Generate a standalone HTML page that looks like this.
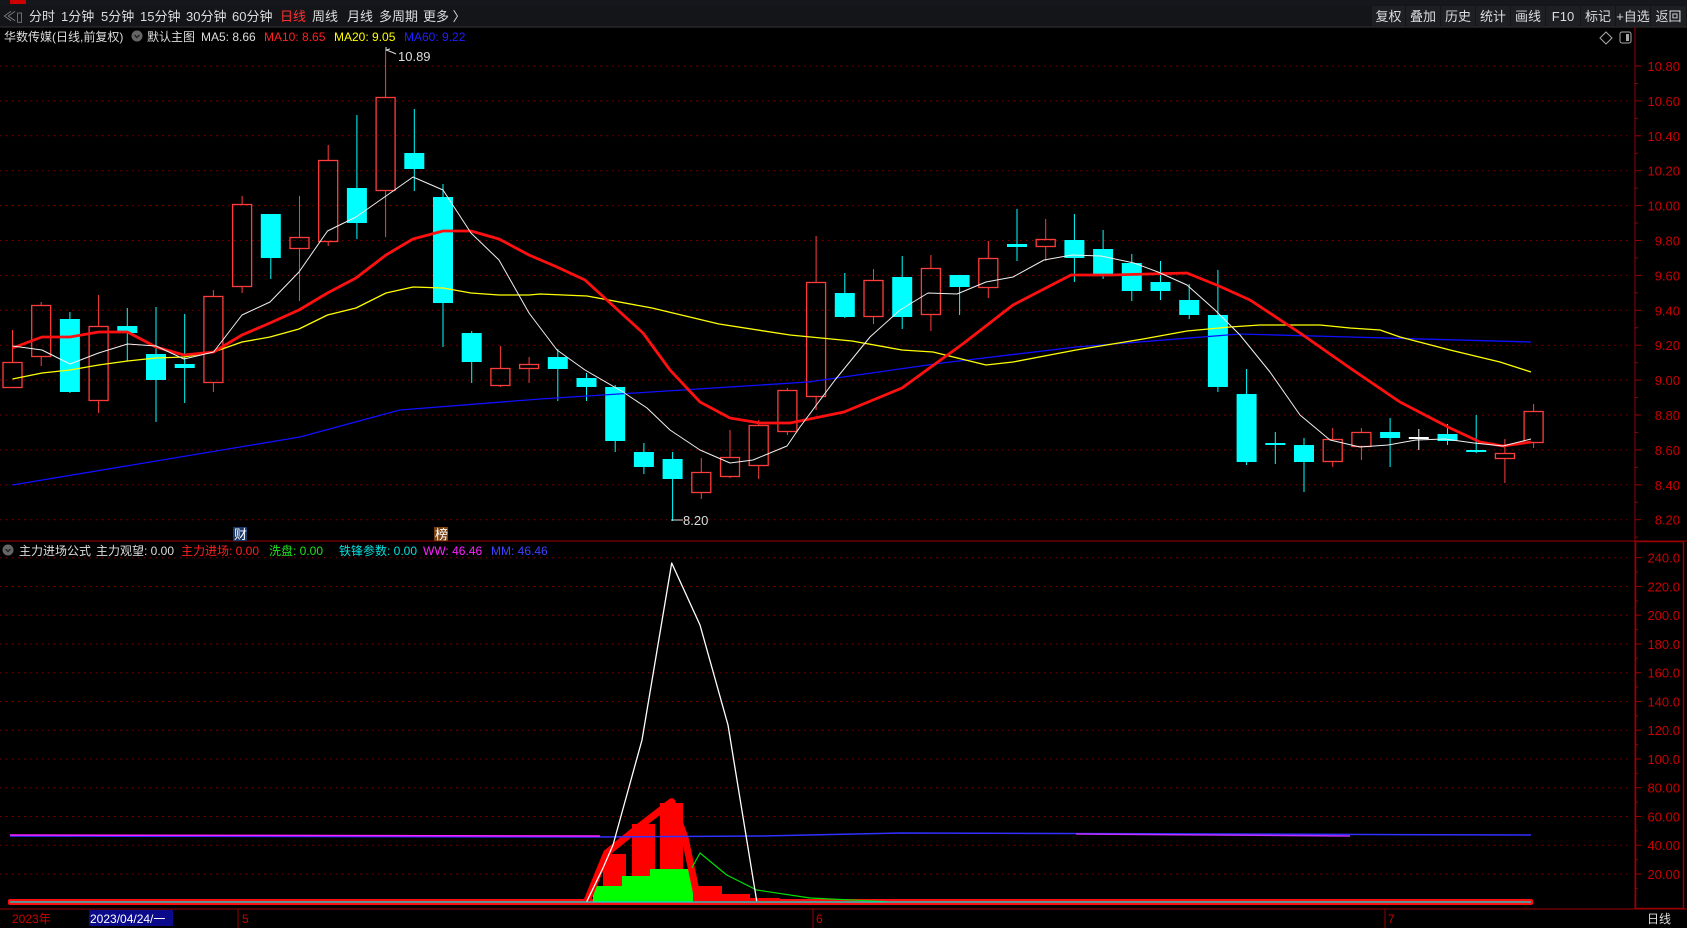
<!DOCTYPE html>
<html><head><meta charset="utf-8"><style>
html,body{margin:0;padding:0;background:#000;width:1687px;height:928px;overflow:hidden}
svg{display:block}
text{font-family:"Liberation Sans","Noto Sans CJK SC",sans-serif;font-size:13px}
.i text{font-size:12px}
</style></head><body>
<svg id="s" width="1687" height="928" xmlns="http://www.w3.org/2000/svg">
<rect width="1687" height="928" fill="#000"/>
<rect x="0" y="0" width="1687" height="5" fill="#15171c"/>
<rect x="10" y="0" width="16" height="4" fill="#c00"/>
<rect x="0" y="5" width="1687" height="22" fill="#141518"/>
<line x1="0" y1="27" x2="1687" y2="27" stroke="#333"/>
<g fill="#ddd">
<text x="3" y="21" fill="#888" font-size="11">≪▯</text>
<text x="29" y="21">分时</text><text x="61" y="21">1分钟</text><text x="101" y="21">5分钟</text>
<text x="140" y="21">15分钟</text><text x="186" y="21">30分钟</text><text x="232" y="21">60分钟</text>
<text x="280" y="21" fill="#ff3030">日线</text><text x="312" y="21">周线</text><text x="347" y="21">月线</text>
<text x="379" y="21">多周期</text><text x="423" y="21">更多 〉</text>
</g>
<g id="btns"></g>
<g class="i">
<text x="4" y="41" fill="#ddd">华数传媒(日线,前复权)</text>
<circle cx="137" cy="36" r="5.5" fill="#666"/><path d="M134.5 35l2.5 2.5 2.5-2.5" stroke="#222" stroke-width="1.4" fill="none"/>
<text x="147" y="41" fill="#ddd">默认主图</text>
<text x="201" y="41" fill="#ddd">MA5: 8.66</text>
<text x="264" y="41" fill="#ff2020">MA10: 8.65</text>
<text x="334" y="41" fill="#ffff00">MA20: 9.05</text>
<text x="404" y="41" fill="#2020ff">MA60: 9.22</text>
</g>
<path d="M1600 38l6-6 6 6-6 6z" stroke="#aaa" fill="none"/>
<rect x="1620" y="32" width="11" height="11" rx="2" stroke="#aaa" fill="none"/><rect x="1626" y="34" width="3" height="7" fill="#aaa"/>
<g id="grid"></g>
<g id="chart"></g>
<line x1="1635" y1="27" x2="1635" y2="909" stroke="#900"/>
<line x1="0" y1="541" x2="1687" y2="541" stroke="#900"/>
<rect x="1635.5" y="541.5" width="48" height="367" fill="none" stroke="#900" stroke-width="1.5"/>
<line x1="0" y1="909" x2="1687" y2="909" stroke="#900"/>
<g class="i">
<circle cx="8" cy="550" r="5.5" fill="#666"/><path d="M5.5 549l2.5 2.5 2.5-2.5" stroke="#222" stroke-width="1.4" fill="none"/>
<text x="19" y="555" fill="#ddd">主力进场公式</text>
<text x="96" y="555" fill="#ddd">主力观望: 0.00</text>
<text x="181" y="555" fill="#ff2020">主力进场: 0.00</text>
<text x="269" y="555" fill="#20e020">洗盘: 0.00</text>
<text x="339" y="555" fill="#00e0e0">铁锋参数: 0.00</text>
<text x="423" y="555" fill="#ff20ff">WW: 46.46</text>
<text x="491" y="555" fill="#4040ff">MM: 46.46</text>
</g>
<rect x="233" y="527" width="14" height="14" fill="#1a3a6a"/><text x="234" y="539" fill="#fff" font-size="12">财</text>
<rect x="434" y="527" width="14" height="14" fill="#7a4010"/><text x="435" y="539" fill="#fff" font-size="12">榜</text>
<g class="i">
<text x="12" y="923" fill="#c00">2023年</text>
<rect x="89" y="910" width="84" height="16" fill="#0a0a8a"/>
<text x="90" y="923" fill="#fff">2023/04/24/一</text>
<line x1="238" y1="909" x2="238" y2="928" stroke="#900"/><text x="242" y="923" fill="#c00">5</text>
<line x1="813" y1="909" x2="813" y2="928" stroke="#900"/><text x="816" y="923" fill="#c00">6</text>
<line x1="1385" y1="909" x2="1385" y2="928" stroke="#900"/><text x="1388" y="923" fill="#c00">7</text>
<text x="1647" y="923" fill="#ddd">日线</text>
</g>
</svg>
<script>
var NS="http://www.w3.org/2000/svg";
function el(p,t,a,txt){var e=document.createElementNS(NS,t);for(var k in a)e.setAttribute(k,a[k]);if(txt!==undefined)e.textContent=txt;p.appendChild(e);return e;}
var s=document.getElementById('s'),G=document.getElementById('grid'),C=document.getElementById('chart'),B=document.getElementById('btns');
var bl=[["复权",1372],["叠加",1406],["历史",1441],["统计",1476],["画线",1511],["F10",1546],["标记",1581],["+自选",1616],["返回",1651]];
bl.forEach(function(b,i){var w=(i<8?bl[i+1][1]:1687)-b[1]-1;el(B,'rect',{x:b[1],y:6,width:w,height:20,fill:'#1e1f22'});el(B,'text',{x:b[1]+w/2,y:21,fill:'#ddd','text-anchor':'middle'},b[0]);});
for(var k=0;k<14;k++){var y=66+k*34.9;el(G,'line',{x1:0,y1:y,x2:1630,y2:y,stroke:'#7a0000','stroke-dasharray':'1.5,4.5'});
el(G,'line',{x1:1635,y1:y,x2:1641,y2:y,stroke:'#900'});el(G,'line',{x1:1635,y1:y+17.45,x2:1638,y2:y+17.45,stroke:'#900'});
el(G,'text',{x:1680,y:y+5,fill:'#c80000','text-anchor':'end','font-size':'12.5'},(10.8-k*0.2).toFixed(2));}
for(var k=0;k<12;k++){var y=557.7+k*28.75;el(G,'line',{x1:0,y1:y,x2:1630,y2:y,stroke:'#7a0000','stroke-dasharray':'1.5,4.5'});
el(G,'line',{x1:1635,y1:y,x2:1641,y2:y,stroke:'#900'});el(G,'line',{x1:1635,y1:y+14.4,x2:1638,y2:y+14.4,stroke:'#900'});
var v=240-k*20;el(G,'text',{x:1680,y:y+5,fill:'#c80000','text-anchor':'end','font-size':'12.5'},v>=100?v.toFixed(1):v.toFixed(2));}
var cd=[["R",362,388,330,388],["R",305,357,302,366],["C",319,392,312,393],["R",326,401,295,413],["C",326,333,308,361],["C",354,380,307,422],["C",364,368,314,403],["R",296,383,290,392],["R",204,287,196,293],["C",214,258,214,279],["R",237,249,196,301],["R",160,242,145,246],["C",188,223,115,239],["R",97,191,50,237],["C",153,169,109,191],["C",197,303,184,347],["C",333,362,331,383],["R",368,386,346,387],["R",364,369,357,383],["C",357,369,349,401],
["C",378,387,373,401],["C",387,441,385,452],["C",452,467,443,474],["C",459,479,452,521],["R",472,493,458,499],["R",457,477,430,478],["R",425,466,420,479],["R",390,432,388,435],["R",282,397,236,410],["C",293,317,273,318],["R",280,317,269,324],["C",277,317,256,329],["R",268,315,255,331],["C",275,287,275,315],["R",258,288,241,298],["C",244,247,209,261],["R",239,247,219,261],["C",240,258,214,282],["C",249,274,230,279],["C",263,291,254,301],["C",282,291,261,300],["C",300,315,284,319],["C",315,387,270,392],["C",394,462,369,465],["C",443,445,432,464],["C",445,462,438,492],["R",439,462,428,467],["R",432,447,428,460],["C",432,438,418,467],["W",437,439,429,450],["C",434,441,424,445],["C",450,452,415,453],["R",453,459,439,483],["R",411,443,404,448]];
cd.forEach(function(c,i){var x=12.5+i*28.7;var col=c[0]=="R"?"#ff3c3c":c[0]=="W"?"#fff":"#00ffff";
if(c[0]=="R"){el(C,'line',{x1:x,y1:c[3],x2:x,y2:c[1],stroke:col});el(C,'line',{x1:x,y1:c[2],x2:x,y2:c[4],stroke:col});el(C,'rect',{x:x-9.5,y:c[1]+.5,width:19,height:Math.max(c[2]-c[1]-1,1),fill:'none',stroke:col,'stroke-width':1.3});}
else{el(C,'line',{x1:x,y1:c[3],x2:x,y2:c[4],stroke:col});el(C,'rect',{x:x-10,y:c[1],width:20,height:Math.max(c[2]-c[1],2),fill:col});}});
function pl(pts,col,w){el(C,'polyline',{points:pts,fill:'none',stroke:col,'stroke-width':w,'stroke-linejoin':'round'});}
pl("12.5,485 300,437 400,410 540,399 808,382 942,363 1076,347 1240,334 1350,337 1531,342","#1010ff",1.3);
pl("12.5,379 42,373 70,370 98.6,365 127.5,361 156,358 184,357 213.6,352 242,342 270,337 299,329 327.5,315 356,308 386,293 413,287 443,288 471,293 499,295 529,295 540,294 587,296 652,308 719,324 790,335 852,341 902,350 933,352 986,365 1013,362 1076,350 1143,339 1187,331 1230,327 1260,325 1320,325 1350,328 1380,330 1400,337 1450,350 1500,362 1531,372","#ffff00",1.3);
pl("12.5,348 42,337 70,337 98.6,332 127.5,332 156,347 184,355 213.6,352 242,335 270,323 299,310 327.5,293 356,278 386,255 413,239 443,231 471,231 499,239 529,255 557,267 585,280 643,333 670,370 700,402 730,418 760,423 790,423 844,412 902,388 964,343 1013,305 1071,275 1111,275 1187,273 1219,286 1250,300 1300,333 1350,368 1400,402 1450,428 1480,442 1503,446 1531,442","#ff1010",2.8);
pl("12.5,346 42,350 70,364 98.6,353 127.5,344 156,346 184,359 213.6,352 242,315 270,302 299,272 327.5,231 356,217 386,196 413,177 443,190 471,233 499,260 529,313 557,350 585,370 623,392 647,408 670,430 700,450 730,463 753,460 787,446 800,427 835,380 870,337 900,310 928,293 957,294 986,282 1013,277 1044,260 1072,255 1101,256 1134,263 1158,272 1187,285 1215,310 1240,335 1270,372 1300,415 1330,440 1360,447 1388,445 1416,440 1445,439 1474,443 1503,446 1531,439","#f0f0f0",1);
el(C,'path',{d:'M386 50l4-1M386 50l0 -3M386 50q6 2 10 4',stroke:'#ddd',fill:'none'});
el(C,'text',{x:398,y:61,fill:'#ddd','font-size':'12'},"10.89");
el(C,'line',{x1:671,y1:520,x2:683,y2:520,stroke:'#ddd'});
el(C,'text',{x:683,y:525,fill:'#ddd','font-size':'12'},"8.20");
el(C,'rect',{x:8,y:899,width:1525,height:6,rx:2,fill:'#ff1010'});
[[603,626,854],[632,655,824],[660,683,803],[679,698,886],[698,722,886],[722,750,894],[750,780,898]].forEach(function(r){el(C,'rect',{x:r[0],y:r[2],width:r[1]-r[0],height:902-r[2],fill:'#ff0000'});});
[[593,622,886],[622,650,876],[650,693,869]].forEach(function(r){el(C,'rect',{x:r[0],y:r[2],width:r[1]-r[0],height:902-r[2],fill:'#00ff00'});});
pl("586.7,901.7 606.7,853 640,826 671.7,801.7 685,838 698,900","#ff0000",7);
pl("691.7,868 700,853 726.7,875 756.7,890 810,898 886.7,901.7","#00e000",1.2);
pl("10,836 600,837 760,836 900,833 1531,835","#3030ff",1.5);
pl("10,835 600,836","#ff20ff",1.5);
pl("1076,834 1350,836","#c030ff",1.5);
pl("586.7,901.7 603,868 613,845 642,740 671.7,563 700,625 728,725 756.7,901","#fff",1.3);
el(C,'line',{x1:10,y1:902,x2:1531,y2:902,stroke:'#00e0e0','stroke-width':1.2});
</script>
</body></html>
